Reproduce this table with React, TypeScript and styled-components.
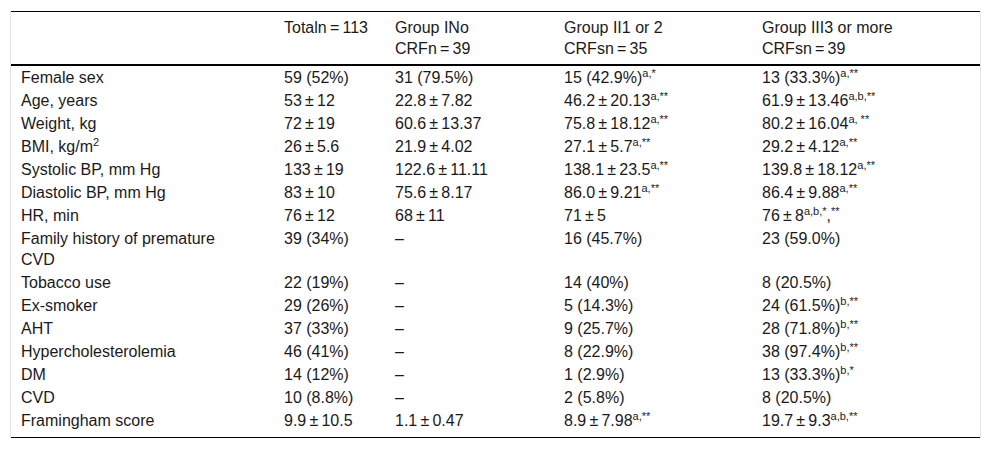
import React from "react";
import styled, { createGlobalStyle } from "styled-components";

const GlobalStyle = createGlobalStyle`
  html, body { margin: 0; padding: 0; background: #fff; }
  body { font-family: "Liberation Sans", Arial, sans-serif; color: #1a1a1a; }
`;

const Page = styled.div`
  padding: 11px 10px 0 11px;
  width: 992px;
  box-sizing: border-box;
`;

const Frame = styled.div`
  border-left: 1px solid #e4e4e4;
  border-right: 1px solid #e4e4e4;
  width: 971px;
  box-sizing: border-box;
  margin-left: -1px;
`;

const Table = styled.table`
  width: 100%;
  border-collapse: collapse;
  font-size: 16px;
  line-height: 21px;
  table-layout: fixed;
  border-top: 1px solid #000;
  border-bottom: 1px solid #000;
`;

const Head = styled.thead`
  border-bottom: 2px solid #000;
`;

const Th = styled.th`
  text-align: left;
  font-weight: normal;
  vertical-align: top;
  padding: 5px 10px 5px 10px;
`;

const Td = styled.td`
  text-align: left;
  vertical-align: top;
  padding: 1px 10px;
`;

const Row = styled.tr<{ $last?: boolean }>`
  & > td {
    padding-bottom: ${(p) => (p.$last ? "6px" : "1px")};
  }
`;

const Sup = styled.sup`
  font-size: 11px;
  line-height: 0;
  vertical-align: 6px;
`;

const T = "\u2009";
const pm = `${T}±${T}`;

type Cell = { v: string; s?: string; tail?: string; s2?: string };

const rows: { label: React.ReactNode; cells: Cell[] }[] = [
  { label: "Female sex", cells: [{ v: "59 (52%)" }, { v: "31 (79.5%)" }, { v: "15 (42.9%)", s: "a,*" }, { v: "13 (33.3%)", s: "a,**" }] },
  { label: "Age, years", cells: [{ v: `53${pm}12` }, { v: `22.8${pm}7.82` }, { v: `46.2${pm}20.13`, s: "a,**" }, { v: `61.9${pm}13.46`, s: "a,b,**" }] },
  { label: "Weight, kg", cells: [{ v: `72${pm}19` }, { v: `60.6${pm}13.37` }, { v: `75.8${pm}18.12`, s: "a,**" }, { v: `80.2${pm}16.04`, s: "a, **" }] },
  { label: <>BMI, kg/m<Sup>2</Sup></>, cells: [{ v: `26${pm}5.6` }, { v: `21.9${pm}4.02` }, { v: `27.1${pm}5.7`, s: "a,**" }, { v: `29.2${pm}4.12`, s: "a,**" }] },
  { label: "Systolic BP, mm Hg", cells: [{ v: `133${pm}19` }, { v: `122.6${pm}11.11` }, { v: `138.1${pm}23.5`, s: "a,**" }, { v: `139.8${pm}18.12`, s: "a,**" }] },
  { label: "Diastolic BP, mm Hg", cells: [{ v: `83${pm}10` }, { v: `75.6${pm}8.17` }, { v: `86.0${pm}9.21`, s: "a,**" }, { v: `86.4${pm}9.88`, s: "a,**" }] },
  { label: "HR, min", cells: [{ v: `76${pm}12` }, { v: `68${pm}11` }, { v: `71${pm}5` }, { v: `76${pm}8`, s: "a,b,*", tail: ",", s2: "**" }] },
  { label: <>Family history of premature<br />CVD</>, cells: [{ v: "39 (34%)" }, { v: "–" }, { v: "16 (45.7%)" }, { v: "23 (59.0%)" }] },
  { label: "Tobacco use", cells: [{ v: "22 (19%)" }, { v: "–" }, { v: "14 (40%)" }, { v: "8 (20.5%)" }] },
  { label: "Ex-smoker", cells: [{ v: "29 (26%)" }, { v: "–" }, { v: "5 (14.3%)" }, { v: "24 (61.5%)", s: "b,**" }] },
  { label: "AHT", cells: [{ v: "37 (33%)" }, { v: "–" }, { v: "9 (25.7%)" }, { v: "28 (71.8%)", s: "b,**" }] },
  { label: "Hypercholesterolemia", cells: [{ v: "46 (41%)" }, { v: "–" }, { v: "8 (22.9%)" }, { v: "38 (97.4%)", s: "b,**" }] },
  { label: "DM", cells: [{ v: "14 (12%)" }, { v: "–" }, { v: "1 (2.9%)" }, { v: "13 (33.3%)", s: "b,*" }] },
  { label: "CVD", cells: [{ v: "10 (8.8%)" }, { v: "–" }, { v: "2 (5.8%)" }, { v: "8 (20.5%)" }] },
  { label: "Framingham score", cells: [{ v: `9.9${pm}10.5` }, { v: `1.1${pm}0.47` }, { v: `8.9${pm}7.98`, s: "a,**" }, { v: `19.7${pm}9.3`, s: "a,b,**" }] },
];

export default function App() {
  return (
    <>
      <GlobalStyle />
      <Page>
        <Frame>
          <Table>
            <colgroup>
              <col style={{ width: 263 }} />
              <col style={{ width: 111 }} />
              <col style={{ width: 169 }} />
              <col style={{ width: 198 }} />
              <col />
            </colgroup>
            <Head>
              <tr>
                <Th />
                <Th>Total{`n${T}=${T}113`}</Th>
                <Th>Group INo<br />{`CRFn${T}=${T}39`}</Th>
                <Th>Group II1 or 2<br />{`CRFsn${T}=${T}35`}</Th>
                <Th>Group III3 or more<br />{`CRFsn${T}=${T}39`}</Th>
              </tr>
            </Head>
            <tbody>
              {rows.map((r, i) => (
                <Row key={i} $last={i === rows.length - 1}>
                  <Td>{r.label}</Td>
                  {r.cells.map((c, j) => (
                    <Td key={j}>
                      {c.v}
                      {c.s && <Sup>{c.s}</Sup>}
                      {c.tail}
                      {c.s2 && <Sup>{c.s2}</Sup>}
                    </Td>
                  ))}
                </Row>
              ))}
            </tbody>
          </Table>
        </Frame>
      </Page>
    </>
  );
}
